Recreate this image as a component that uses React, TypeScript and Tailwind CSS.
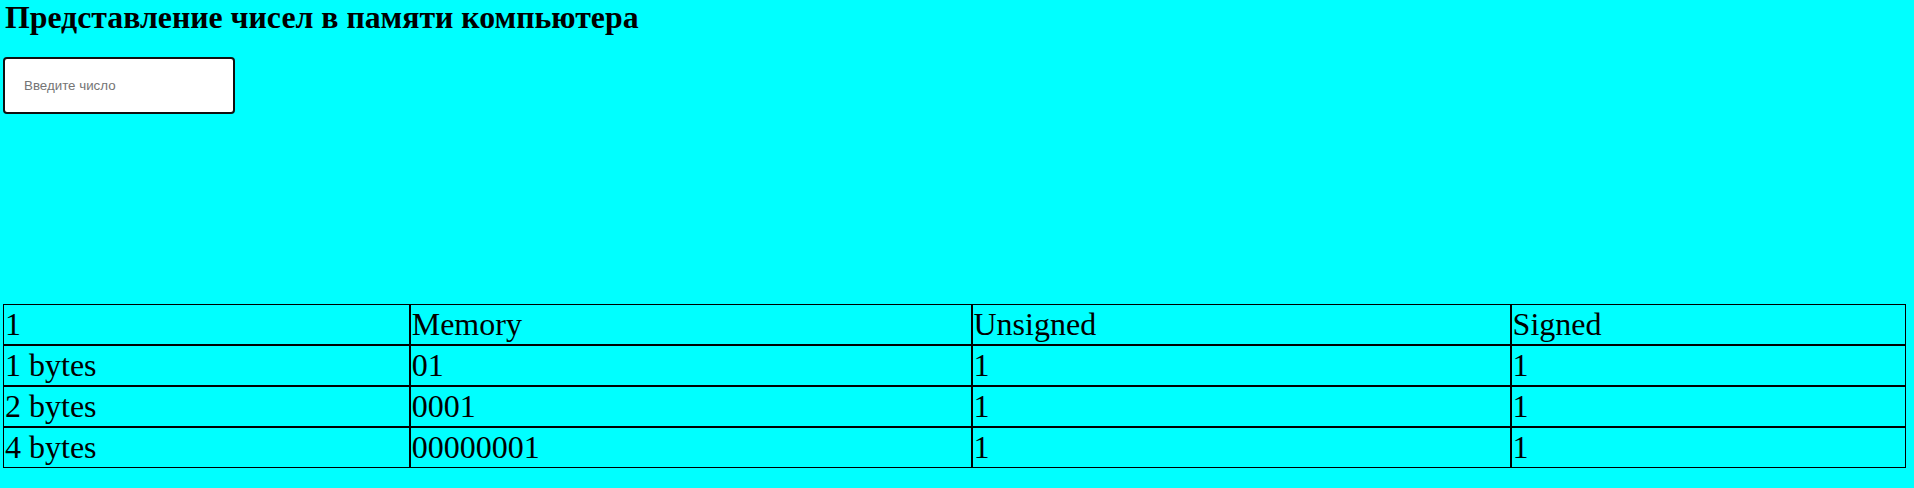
import React, { useState } from 'react';

const rows = [
  { size: '1 bytes', memory: '01', unsigned: '1', signed: '1' },
  { size: '2 bytes', memory: '0001', unsigned: '1', signed: '1' },
  { size: '4 bytes', memory: '00000001', unsigned: '1', signed: '1' },
];

export default function App() {
  const [value, setValue] = useState('');

  return (
    <div className="min-h-[488px] bg-[#00ffff] pl-[3px] pr-2 text-black" style={{ fontFamily: '"Liberation Serif", serif' }}>
      {/* Title */}
      <h1 className="pl-[2px] text-[31.8px] font-bold leading-[35px]">Представление чисел в памяти компьютера</h1>

      {/* Number input */}
      <input
        type="text"
        autoFocus
        value={value}
        onChange={(e) => setValue(e.target.value)}
        placeholder="Введите число"
        className="mt-[22px] block h-[57px] w-[232px] rounded-[4px] border-2 border-[#101010] bg-white pl-[19px] text-[13.33px] text-black outline-none placeholder:text-[#757575]"
        style={{ fontFamily: '"Liberation Sans", Arial, sans-serif' }}
      />

      {/* Result table */}
      <table className="mt-[190px] w-[1903px] border-separate border-spacing-0 text-[32px] leading-[37px]">
        <tbody>
          <tr>
            <td className="border border-black p-[1px]">{value || '1'}</td>
            <td className="border border-black p-[1px]">Memory</td>
            <td className="border border-black p-[1px]">Unsigned</td>
            <td className="border border-black p-[1px]">Signed</td>
          </tr>
          {rows.map((r) => (
            <tr key={r.size}>
              <td className="border border-black p-[1px]">{r.size}</td>
              <td className="border border-black p-[1px]">{r.memory}</td>
              <td className="border border-black p-[1px]">{r.unsigned}</td>
              <td className="border border-black p-[1px]">{r.signed}</td>
            </tr>
          ))}
        </tbody>
      </table>
    </div>
  );
}
